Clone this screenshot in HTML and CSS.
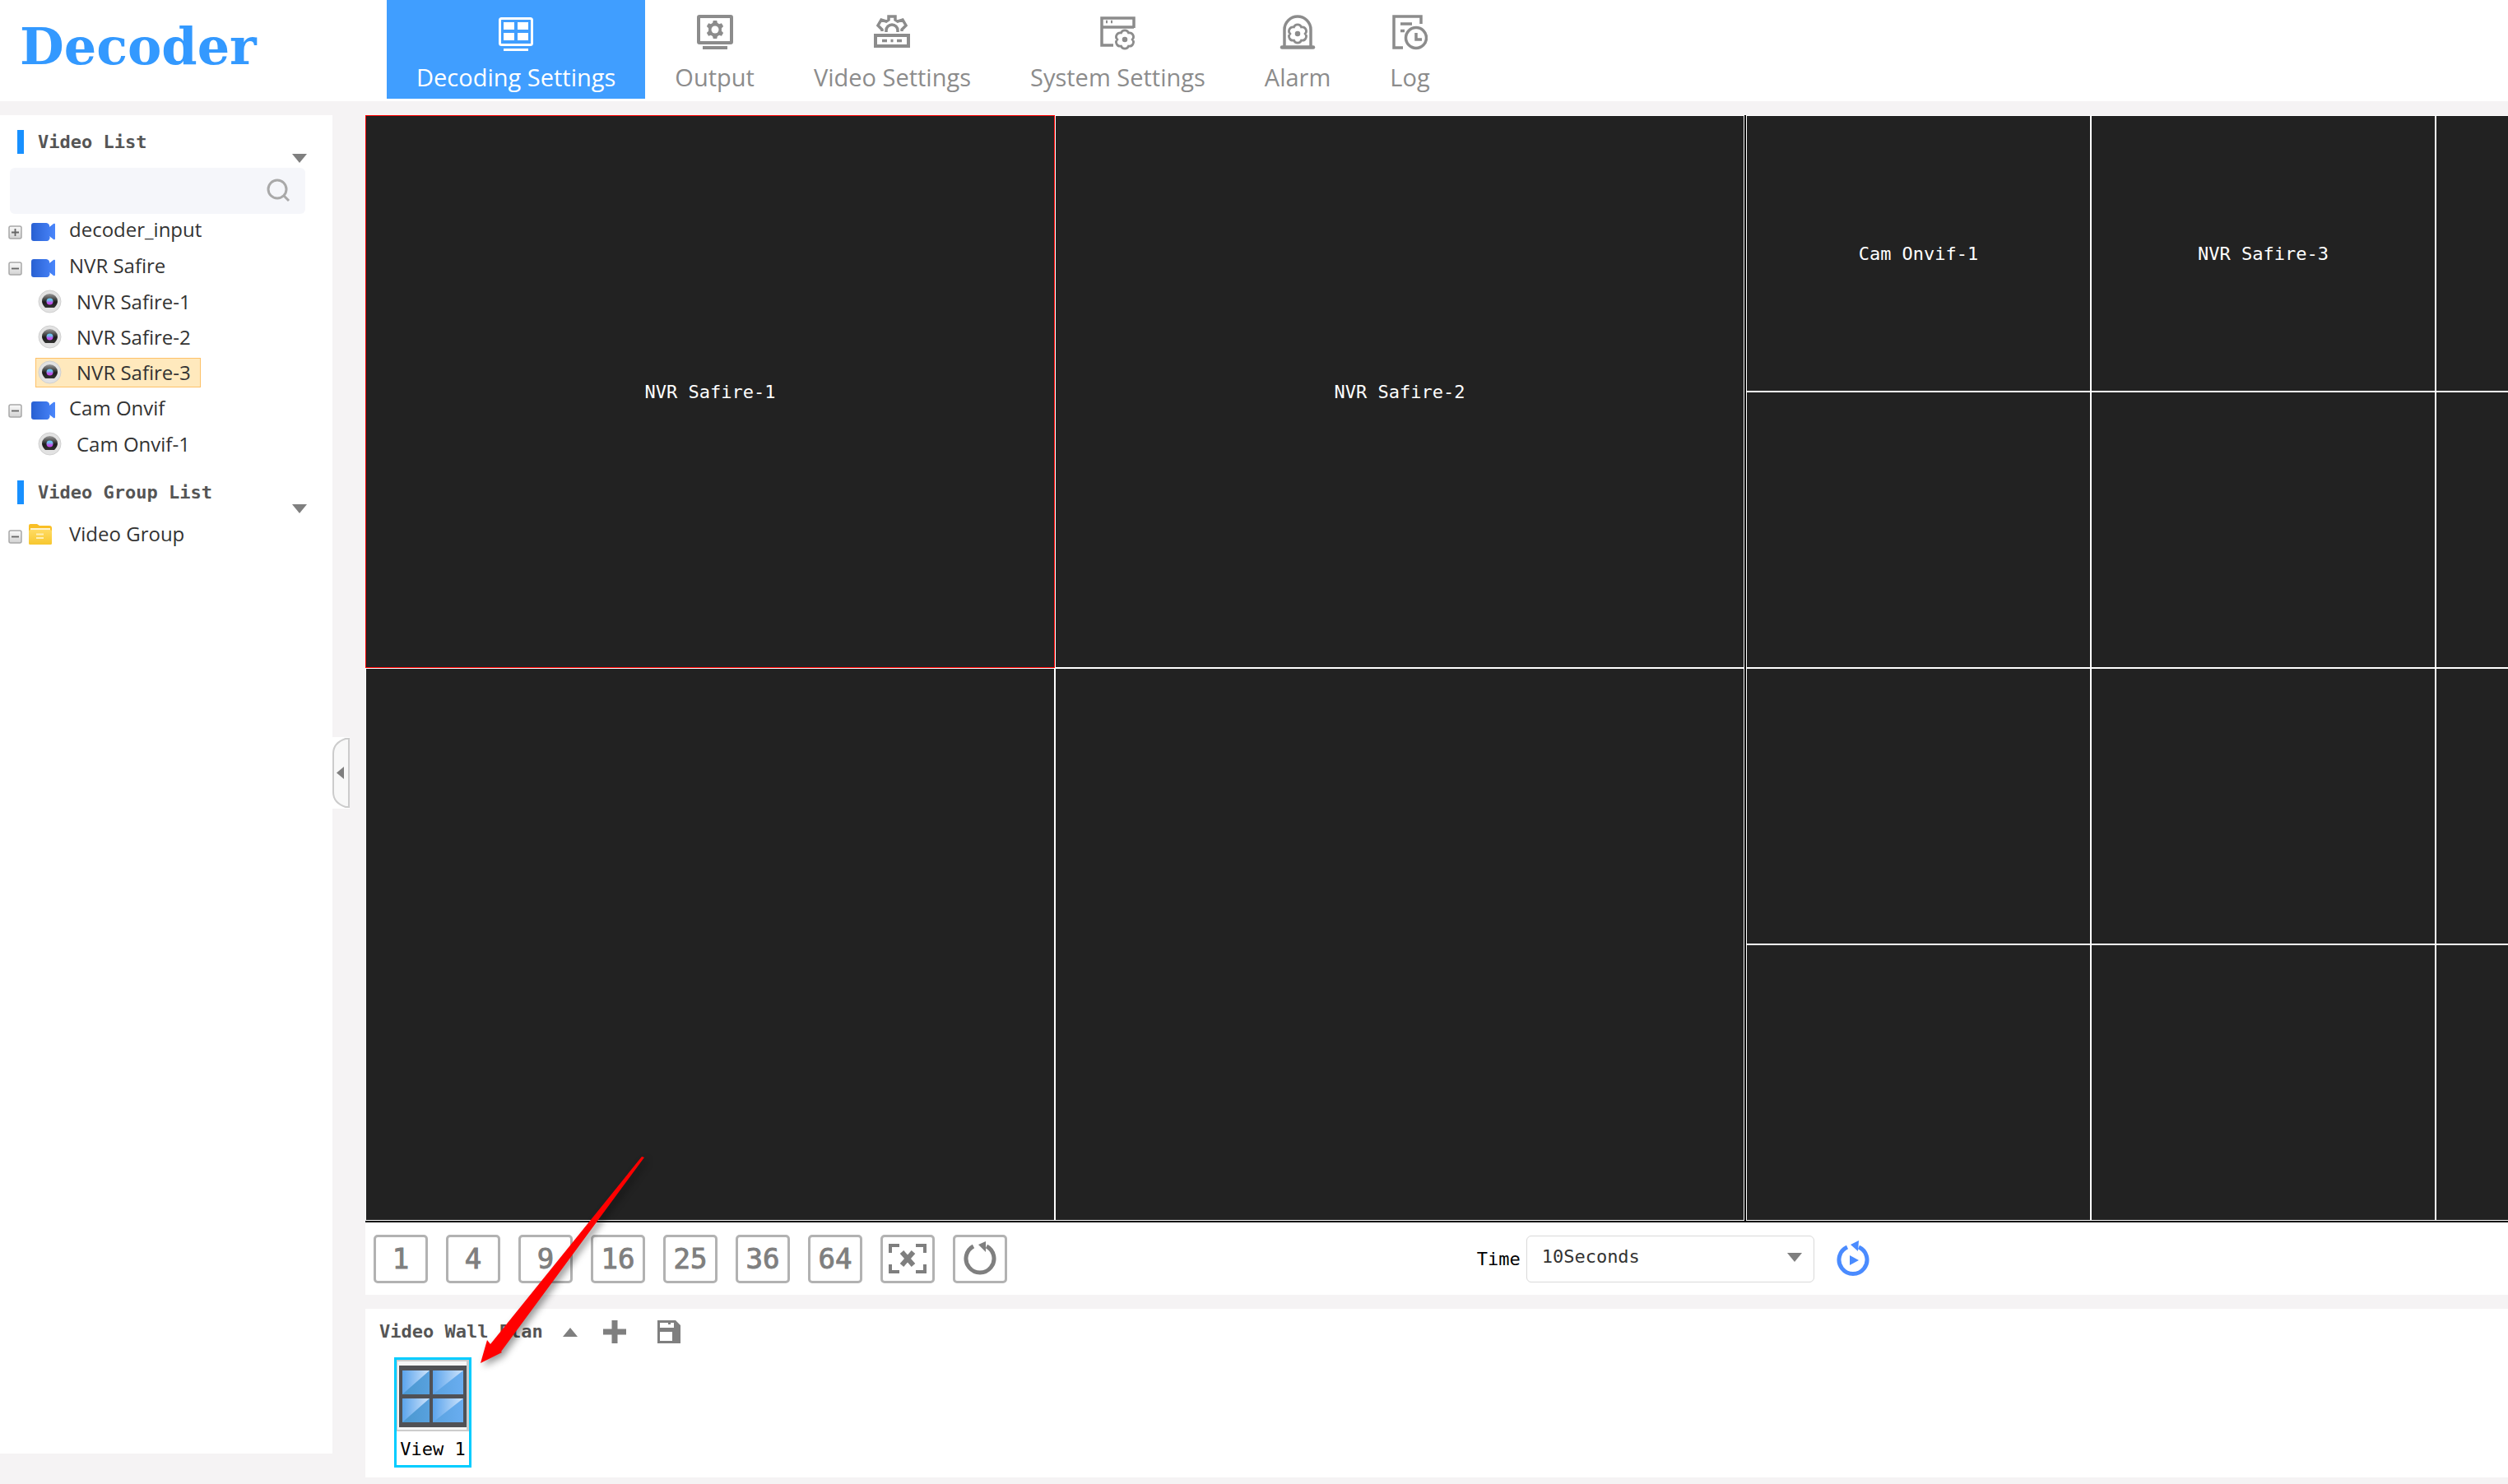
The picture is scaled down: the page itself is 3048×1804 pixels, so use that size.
FILE: index.html
```html
<!DOCTYPE html>
<html lang="en">
<head>
  <meta charset="UTF-8">
  <meta name="viewport" content="width=device-width, initial-scale=1">
  <title>Decoder</title>
  <link rel="stylesheet" href="styles.css">
</head>
<body>
  <!-- shared icons -->
  <svg class="defs" aria-hidden="true">
    <defs>
      <linearGradient id="camBlue"><stop offset="0" stop-color="#2860d2"/><stop offset="1" stop-color="#4a86fb"/></linearGradient>
      <linearGradient id="boxGrey" x2="0" y2="1"><stop offset="0" stop-color="#fafafa"/><stop offset="1" stop-color="#d2d2d2"/></linearGradient>
      <linearGradient id="lensBlack" x2="0" y2="1"><stop offset="0" stop-color="#999"/><stop offset=".6" stop-color="#1c1c1c"/><stop offset="1" stop-color="#333"/></linearGradient>
      <linearGradient id="lensDot" x2="0" y2="1"><stop offset=".3" stop-color="#6ec3ee"/><stop offset=".7" stop-color="#c050e8"/></linearGradient>
      <linearGradient id="folderFill" x2="0" y2="1"><stop offset="0" stop-color="#ffdb63"/><stop offset="1" stop-color="#f7c72f"/></linearGradient>
      <linearGradient id="glassLight" x2="1" y2="0"><stop offset="0" stop-color="#5ba4ec"/><stop offset="1" stop-color="#cfe4fb"/></linearGradient>
      <linearGradient id="glassDark" x2="1" y2="0"><stop offset="0" stop-color="#4a97cf"/><stop offset="1" stop-color="#69adf0"/></linearGradient>
      <symbol id="plusBox" viewBox="0 0 17 17">
        <rect x="1" y="1" width="15" height="15" rx="2" fill="url(#boxGrey)" stroke="#a8a8a8" stroke-width="1.5"/>
        <path d="M4 8.500h9M8.500 4v9" stroke="#666" stroke-width="1.800"/>
      </symbol>
      <symbol id="minusBox" viewBox="0 0 17 17">
        <rect x="1" y="1" width="15" height="15" rx="2" fill="url(#boxGrey)" stroke="#a8a8a8" stroke-width="1.5"/>
        <path d="M4 8.500h9" stroke="#666" stroke-width="1.800"/>
      </symbol>
      <symbol id="camcorder" viewBox="0 0 29 22">
        <path d="M3 0h15a4 4 0 0 1 4 5l5-4a1.200 1.200 0 0 1 2 1v17a1.200 1.200 0 0 1-2 1l-5-4a4 4 0 0 1-4 6H3a3 3 0 0 1-3-3V3a3 3 0 0 1 3-3z" fill="url(#camBlue)"/>
      </symbol>
      <symbol id="lens" viewBox="0 0 29 29">
        <circle cx="14.500" cy="14.500" r="13.500" fill="#e2e2e2" stroke="#d0d0d0"/>
        <path d="M5 14a9.500 9 0 0 1 19 0q0 4-4 8H9q-4-4-4-8z" fill="url(#lensBlack)"/>
        <circle cx="14.500" cy="14.500" r="4" fill="url(#lensDot)"/>
      </symbol>
      <symbol id="folder" viewBox="0 0 28 25">
        <path d="M0 2a2 2 0 0 1 2-2h8l3 2h12a3 3 0 0 1 3 3v18a2 2 0 0 1-2 2H2a2 2 0 0 1-2-2z" fill="#f9bf25"/>
        <path d="M2 5h24v6H2z" fill="#fff3cf"/>
        <path d="M0 9q0-2 3-2h22q3 0 3 2v14a2 2 0 0 1-2 2H2a2 2 0 0 1-2-2z" fill="url(#folderFill)"/>
        <path d="M9 12.500h9M9 17h9" stroke="#fff0b8" stroke-width="2"/>
      </symbol>
      <symbol id="gear" viewBox="0 0 20 20">
        <path d="M8 0h4l.6 2.600 2 1.200 2.600-.8 2 3.400-2 1.900v3.400l2 1.900-2 3.400-2.600-.8-2 1.200L12 20H8l-.6-2.600-2-1.200-2.600.8-2-3.400 2-1.900V8.300l-2-1.900 2-3.400 2.600.8 2-1.200z"/>
      </symbol>
      <symbol id="flower" viewBox="0 0 24 24">
        <path d="M20.500 12A4.500 4.500 0 0 0 16.200 4.600A4.500 4.500 0 0 0 7.800 4.600A4.500 4.500 0 0 0 3.500 12A4.500 4.500 0 0 0 7.800 19.400A4.500 4.500 0 0 0 16.200 19.400A4.500 4.500 0 0 0 20.500 12z" fill="#fff" stroke-width="2.600"/>
        <circle cx="12" cy="12" r="3" fill="currentColor" stroke="none"/>
      </symbol>
    </defs>
  </svg>

  <header class="header">
    <a class="logo" href="#">Decoder</a>
    <nav class="nav">
      <a class="nav-item active" href="#">
        <svg width="44" height="44" viewBox="0 0 44 44" fill="none" stroke="currentColor">
          <rect x="2.500" y="4.500" width="39" height="32" rx="2" stroke-width="3"/>
          <path d="M7 9h13v9H7zM24 9h13v9H24zM7 22h13v9H7zM24 22h13v9H24z" fill="currentColor" stroke="none"/>
          <path d="M7 43h30" stroke-width="4"/>
        </svg>
        Decoding Settings
      </a>
      <a class="nav-item" href="#">
        <svg width="44" height="44" viewBox="0 0 44 44" fill="none" stroke="currentColor">
          <rect x="2" y="2" width="40" height="32" rx="1" stroke-width="4"/>
          <use href="#gear" x="11" y="7" width="22" height="22" fill="currentColor" stroke="none"/>
          <circle cx="22" cy="18" r="4.500" fill="#fff" stroke="none"/>
          <path d="M7 40h30" stroke-width="4"/>
        </svg>
        Output
      </a>
      <a class="nav-item" href="#">
        <svg width="44" height="44" viewBox="0 0 44 44" fill="none" stroke="currentColor" stroke-width="4">
          <path d="M10 20v-2l-5-5 4-7 6 2 3-2V2h8v4l3 2 6-2 4 7-5 5v2" stroke-width="3.500"/>
          <path d="M15 21v-2a7 7 0 0 1 14 0v2" stroke-width="3.500"/>
          <rect x="2" y="25" width="40" height="13"/>
          <path d="M10 31.500h6M20.500 31.500h3M28 31.500h6" stroke-width="3.500"/>
        </svg>
        Video Settings
      </a>
      <a class="nav-item" href="#">
        <svg width="44" height="44" viewBox="0 0 44 44" fill="none" stroke="currentColor" stroke-width="3.500">
          <path d="M17 37H3V4h39v12M3 15h39"/>
          <path d="M8 8.500h2M14 8.500h2"/>
          <use href="#flower" x="18" y="17" width="26" height="26"/>
        </svg>
        System Settings
      </a>
      <a class="nav-item" href="#">
        <svg width="44" height="44" viewBox="0 0 44 44" fill="none" stroke="currentColor" stroke-width="3.500">
          <path d="M6 40V18a16 16 0 0 1 32 0v22"/>
          <path d="M3 39.500h38" stroke-width="4.500" stroke-linecap="round"/>
          <use href="#flower" x="9" y="10" width="26" height="26"/>
        </svg>
        Alarm
      </a>
      <a class="nav-item" href="#">
        <svg width="44" height="44" viewBox="0 0 44 44" fill="none" stroke="currentColor" stroke-width="3.500">
          <path d="M14 40H3V2h33v9M11 11h14M11 19.500h5"/>
          <circle cx="30" cy="28" r="12.500"/>
          <path d="M30 22v8h7"/>
        </svg>
        Log
      </a>
    </nav>
  </header>

  <div class="content">
    <aside class="sidebar">
      <section>
        <h2 class="side-title">Video List</h2>
        <button class="collapse" aria-label="Collapse video list"><span class="caret"></span></button>
        <label class="search">
          <input type="text" aria-label="Search">
          <svg width="30" height="30" viewBox="0 0 30 30" fill="none" stroke="#a9a9a9" stroke-width="3"><circle cx="14" cy="13" r="11"/><path d="m22 21 6 6"/></svg>
        </label>
        <ul class="tree">
          <li class="group"><svg class="toggle"><use href="#plusBox"/></svg><svg class="cam"><use href="#camcorder"/></svg><span>decoder_input</span></li>
          <li class="group"><svg class="toggle"><use href="#minusBox"/></svg><svg class="cam"><use href="#camcorder"/></svg><span>NVR Safire</span></li>
          <li class="channel"><a href="#"><svg class="lens"><use href="#lens"/></svg>NVR Safire-1</a></li>
          <li class="channel"><a href="#"><svg class="lens"><use href="#lens"/></svg>NVR Safire-2</a></li>
          <li class="channel"><a class="selected" href="#"><svg class="lens"><use href="#lens"/></svg>NVR Safire-3</a></li>
          <li class="group"><svg class="toggle"><use href="#minusBox"/></svg><svg class="cam"><use href="#camcorder"/></svg><span>Cam Onvif</span></li>
          <li class="channel"><a href="#"><svg class="lens"><use href="#lens"/></svg>Cam Onvif-1</a></li>
        </ul>
      </section>
      <section>
        <h2 class="side-title">Video Group List</h2>
        <button class="collapse" aria-label="Collapse group list"><span class="caret"></span></button>
        <ul class="tree">
          <li class="group"><svg class="toggle"><use href="#minusBox"/></svg><svg class="folder"><use href="#folder"/></svg><span>Video Group</span></li>
        </ul>
      </section>
    </aside>

    <div class="splitter">
      <button class="handle" aria-label="Hide sidebar">
        <svg width="21" height="87" viewBox="0 0 21 87"><path d="M20 2h-4Q1 7 1 20v47q0 13 15 18h4z" fill="#f8f8f8" stroke="#ccc" stroke-width="2"/><path d="M14 36v15l-9-7.500z" fill="#7f7f7f"/></svg>
      </button>
    </div>

    <main class="main">
      <div class="wall">
        <div class="screen split-4">
          <div class="cell current">NVR Safire-1</div>
          <div class="cell">NVR Safire-2</div>
          <div class="cell"></div>
          <div class="cell"></div>
        </div>
        <div class="screen split-16">
          <div class="cell">Cam Onvif-1</div>
          <div class="cell">NVR Safire-3</div>
          <div class="cell"></div><div class="cell"></div>
          <div class="cell"></div><div class="cell"></div><div class="cell"></div><div class="cell"></div>
          <div class="cell"></div><div class="cell"></div><div class="cell"></div><div class="cell"></div>
          <div class="cell"></div><div class="cell"></div><div class="cell"></div><div class="cell"></div>
        </div>
      </div>

      <div class="toolbar">
        <div class="splits">
          <button>1</button>
          <button>4</button>
          <button>9</button>
          <button>16</button>
          <button>25</button>
          <button>36</button>
          <button>64</button>
          <button aria-label="Close all">
            <svg width="46" height="36" viewBox="0 0 46 36" fill="none" stroke="currentColor" stroke-width="4"><path d="M2 11V2h11M33 2h11v9M44 25v9H33M13 34H2v-9"/><path d="m16 10 14 16M30 10 16 26" stroke-width="6"/></svg>
          </button>
          <button aria-label="Reset">
            <svg width="40" height="42" viewBox="0 0 40 42" fill="none" stroke="currentColor" stroke-width="5"><path d="M12 6a17 17 0 1 0 16 0"/><path d="m18 4 9-4v13z" fill="currentColor" stroke="none"/></svg>
          </button>
        </div>
        <div class="time">
          <label for="time">Time</label>
          <span class="select">
            <select id="time"><option>10Seconds</option></select>
            <span class="caret"></span>
          </span>
          <button class="play" aria-label="Start tour">
            <svg width="40" height="44" viewBox="0 0 40 44" fill="none" stroke="#4a8bff" stroke-width="5"><path d="M13 8a17 17 0 1 0 14 0"/><path d="m17 5 10-5-1 13z" fill="#4a8bff" stroke="none"/><path d="m16 18 11 6-11 6z" fill="#4a8bff" stroke="none"/></svg>
          </button>
        </div>
      </div>

      <section class="plan">
        <div class="plan-head">
          <h2>Video Wall Plan</h2>
          <button aria-label="Collapse plan"><span class="caret up"></span></button>
          <button aria-label="Add plan"><svg width="28" height="28" viewBox="0 0 28 28"><path d="M10.500 0h7v10.500H28v7H17.500V28h-7V17.500H0v-7h10.500z" fill="#7f7f7f"/></svg></button>
          <button aria-label="Save plan"><svg width="28" height="28" viewBox="0 0 28 28"><path fill-rule="evenodd" d="M0 0h22l6 6v22H0zM3 3v6h17V3h-4v2h-3V3zM3 14v11h15V14z" fill="#7f7f7f"/></svg></button>
        </div>
        <a class="view" href="#">
          <svg width="88" height="87" viewBox="0 0 88 87">
            <path d="M0 0h88v87H0z" fill="#ccc"/><path d="M1 2h84v83H1z" fill="#f6f6f6"/>
            <path d="M3 7h82v75H3z" fill="#505155"/>
            <g fill="url(#glassDark)"><path d="M7 13h33v29H7zM44 13h37v29H44zM7 47h33v29H7zM44 47h37v29H44z"/></g>
            <g fill="url(#glassLight)"><path d="M7 13h33L7 42z"/><path d="M44 13h37L44 42z"/><path d="M7 47h33L7 76z"/><path d="M44 47h37L44 76z"/></g>
          </svg>
          <span>View 1</span>
        </a>
      </section>

      <svg class="pointer" width="220" height="270" viewBox="0 0 220 270"><path d="m0 268 8-28 4 5L196 17l3 1L25 254l1 1z" fill="#f00"/></svg>
    </main>
  </div>
</body>
</html>
```
FILE: styles.css
```css
* { box-sizing: border-box; }
body {
  margin: 0;
  min-height: 100vh;
  display: flex;
  flex-direction: column;
  background: #f5f3f4;
  color: #333;
  font-family: "DejaVu Sans Mono", monospace;
  font-size: 22px;
  overflow-x: hidden;
}
a { color: inherit; text-decoration: none; }
button { padding: 0; border: 0; background: none; color: inherit; font: inherit; cursor: pointer; }
svg { display: block; flex: none; }
h2 { margin: 0; font-size: 22px; color: #555; }
ul { list-style: none; margin: 0; padding: 0; }
.defs { position: absolute; width: 0; height: 0; }
.caret {
  display: block;
  border: 9px solid transparent;
  border-top: 11px solid #7f7f7f;
  border-bottom: 0;
}
.caret.up { border-top: 0; border-bottom: 11px solid #7f7f7f; }

/* Header */
.header { display: flex; height: 123px; background: #fff; }
.logo {
  width: 470px;
  padding: 17px 0 0 24px;
  color: #39f;
  font: bold 62px/80px "DejaVu Serif", serif;
}
.nav { display: flex; height: 120px; }
.nav-item {
  display: flex;
  flex-direction: column;
  align-items: center;
  gap: 12px;
  padding: 18px 36px 0;
  color: #8c8c8c;
  font: 29px/40px "Open Sans", sans-serif;
  white-space: nowrap;
}
.nav-item.active { background: #409eff; color: #fff; }

.content { display: flex; flex: 1; padding-top: 17px; }

/* Sidebar */
.sidebar { width: 404px; margin-bottom: 37px; background: #fff; }
.sidebar section { padding-bottom: 5px; }
.side-title {
  margin: 18px 0 0 21px;
  padding-left: 17px;
  border-left: 8px solid #1890ff;
  line-height: 29px;
}
.collapse { display: block; margin: 0 31px 6px auto; }
.search {
  display: flex;
  align-items: center;
  width: 359px;
  height: 56px;
  margin-left: 12px;
  padding-right: 18px;
  border-radius: 6px;
  background: #f5f6fa;
}
.search input { flex: 1; min-width: 0; height: 100%; padding: 0 12px; border: 0; background: none; font: inherit; }
.tree { margin-top: -3px; font: 24px/34px "Open Sans", sans-serif; }
.group { display: flex; align-items: center; height: 44px; padding-left: 10px; }
.group span { margin-left: 17px; }
.toggle { width: 17px; height: 17px; margin: 6px 11px 0 0; }
.cam { width: 29px; height: 22px; margin-top: 6px; }
.folder { width: 28px; height: 25px; margin: 0 4px 0 -3px; }
.channel { display: flex; align-items: center; height: 43px; padding-left: 43px; }
.channel a { display: flex; align-items: center; padding: 0 11px 0 2px; border: 1px solid transparent; }
.channel a.selected { border-color: #fdc168; background: #ffe9bd; }
.lens { width: 29px; height: 29px; margin-right: 18px; }

.splitter { display: flex; align-items: center; width: 40px; padding-bottom: 65px; }
.handle { background: #fff; }

/* Main area */
.main { position: relative; display: flex; flex: 1; flex-direction: column; min-width: 0; padding-bottom: 8px; }
.wall { display: flex; flex: 1; min-height: 400px; overflow: hidden; border-bottom: 2px solid #000; }
.screen { display: grid; flex: none; aspect-ratio: 1678 / 1344; border-right: 2px solid #000; }
.split-4 { grid-template: repeat(2, 1fr) / repeat(2, 1fr); }
.split-16 { grid-template: repeat(4, 1fr) / repeat(4, 1fr); }
.cell {
  display: flex;
  align-items: center;
  justify-content: center;
  border: 1px solid #fff;
  background: #222;
  color: #fff;
}
.cell.current { border-color: #f00; }

.toolbar { display: flex; align-items: center; height: 88px; padding-left: 10px; background: #fff; }
.splits { display: flex; gap: 22px; }
.splits button {
  display: flex;
  align-items: center;
  justify-content: center;
  width: 66px;
  height: 59px;
  border: 3px solid #b2b2b2;
  border-radius: 5px;
  color: #7f7f7f;
  font-size: 34px;
  -webkit-text-stroke: 1px #7f7f7f;
}
.time { display: flex; align-items: center; margin-left: 22%; color: #000; }
.select { position: relative; margin: 0 27px 0 7px; }
.select select {
  appearance: none;
  display: block;
  width: 350px;
  height: 57px;
  padding: 0 40px 6px 18px;
  border: 1px solid #d9d9d9;
  border-radius: 6px;
  background: #fff;
  color: #333;
  font: inherit;
}
.select .caret { position: absolute; right: 15px; top: 21px; pointer-events: none; }

.plan { height: 205px; margin-top: 17px; padding: 13px 17px; background: #fff; }
.plan-head { display: flex; align-items: center; gap: 38px; }
.plan-head h2 { line-height: 30px; }
.plan-head h2 + button { margin: 0 -7px 0 -14px; }
.view {
  display: block;
  width: 94px;
  height: 134px;
  margin: 16px 0 0 18px;
  border: 3px solid #0cf;
  color: #000;
  line-height: 44px;
  text-align: center;
}

/* Red arrow pointing at the saved view */
.pointer { position: absolute; left: 140px; bottom: 145px; filter: drop-shadow(4px 4px 4px rgba(0,0,0,0.4)); pointer-events: none; }
```
